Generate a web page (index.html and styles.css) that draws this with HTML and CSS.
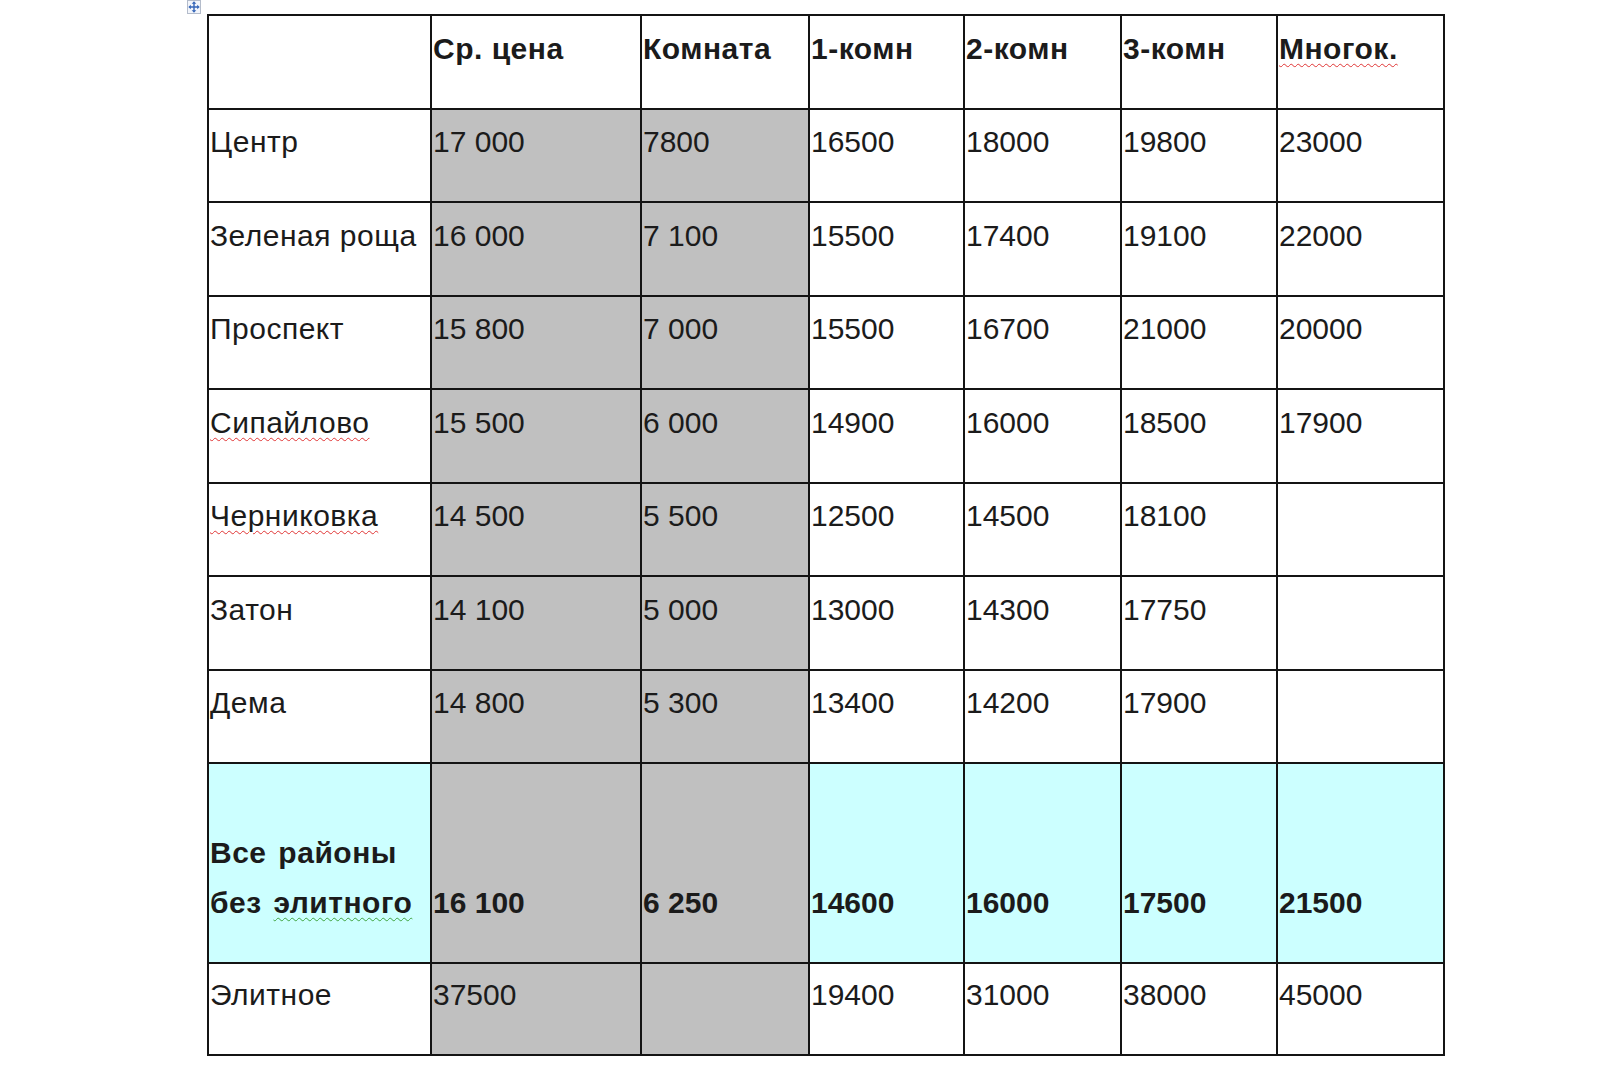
FILE: index.html
```html
<!DOCTYPE html>
<html lang="ru">
<head>
<meta charset="utf-8">
<title>Цены</title>
<link rel="stylesheet" href="styles.css">
</head>
<body>
<div class="sheet">
  <span class="move-handle">
    <svg width="12" height="12" viewBox="0 0 12 12">
      <path d="M6 2 V10 M2 6 H10" stroke="#3565b8" stroke-width="1.4" fill="none"/>
      <path d="M6 0.3 L8.3 2.8 H3.7 Z M6 11.7 L8.3 9.2 H3.7 Z M0.3 6 L2.8 3.7 V8.3 Z M11.7 6 L9.2 3.7 V8.3 Z" fill="#3565b8"/>
    </svg>
  </span>
  <table class="prices">
    <colgroup>
      <col class="c-name"><col class="c-avg"><col class="c-room"><col class="c-k1"><col class="c-k2"><col class="c-k3"><col class="c-many">
    </colgroup>
    <tr class="row head">
      <td></td><td>Ср. цена</td><td>Комната</td><td>1-комн</td><td>2-комн</td><td>3-комн</td><td><span class="err">Многок.</span></td>
    </tr>
    <tr class="row">
      <td>Центр</td><td class="gray">17 000</td><td class="gray">7800</td><td>16500</td><td>18000</td><td>19800</td><td>23000</td>
    </tr>
    <tr class="row">
      <td>Зеленая роща</td><td class="gray">16 000</td><td class="gray">7 100</td><td>15500</td><td>17400</td><td>19100</td><td>22000</td>
    </tr>
    <tr class="row">
      <td>Проспект</td><td class="gray">15 800</td><td class="gray">7 000</td><td>15500</td><td>16700</td><td>21000</td><td>20000</td>
    </tr>
    <tr class="row">
      <td><span class="err">Сипайлово</span></td><td class="gray">15 500</td><td class="gray">6 000</td><td>14900</td><td>16000</td><td>18500</td><td>17900</td>
    </tr>
    <tr class="row">
      <td><span class="err">Черниковка</span></td><td class="gray">14 500</td><td class="gray">5 500</td><td>12500</td><td>14500</td><td>18100</td><td></td>
    </tr>
    <tr class="row">
      <td>Затон</td><td class="gray">14 100</td><td class="gray">5 000</td><td>13000</td><td>14300</td><td>17750</td><td></td>
    </tr>
    <tr class="row">
      <td>Дема</td><td class="gray">14 800</td><td class="gray">5 300</td><td>13400</td><td>14200</td><td>17900</td><td></td>
    </tr>
    <tr class="row total">
      <td class="cyan">Все районы<br>без <span class="gram">элитного</span></td><td class="gray">16 100</td><td class="gray">6 250</td><td class="cyan">14600</td><td class="cyan">16000</td><td class="cyan">17500</td><td class="cyan">21500</td>
    </tr>
    <tr class="row last">
      <td>Элитное</td><td class="gray">37500</td><td class="gray"></td><td>19400</td><td>31000</td><td>38000</td><td>45000</td>
    </tr>
  </table>
  <span class="resize-handle"></span>
</div>
</body>
</html>
```
FILE: styles.css
```css
html, body {
  margin: 0;
  padding: 0;
  background: #ffffff;
}

.sheet {
  position: relative;
  width: 1238px;
  margin: 14px 0 0 207px;
}

.move-handle {
  position: absolute;
  left: -20px;
  top: -14px;
  width: 14px;
  height: 14px;
  box-sizing: border-box;
  border: 1px solid #b4bccb;
  background: #f2f5fb;
  display: flex;
  align-items: center;
  justify-content: center;
}

.move-handle svg {
  display: block;
  width: 12px;
  height: 12px;
}

.resize-handle {
  position: absolute;
  right: -3px;
  bottom: -11px;
  width: 4px;
  height: 5px;
  border: 1px solid #9a9a9a;
  border-bottom: none;
  background: #ffffff;
}

.prices {
  border-collapse: collapse;
  table-layout: fixed;
  width: 1238px;
  font-family: "Liberation Sans", Arial, sans-serif;
  font-size: 30px;
  color: #1b1b1b;
}

.c-name { width: 223px; }
.c-avg { width: 210px; }
.c-room { width: 168px; }
.c-k1 { width: 155px; }
.c-k2 { width: 157px; }
.c-k3 { width: 156px; }
.c-many { width: 167px; }

.prices td {
  border: 2px solid #141414;
  padding: 0 0 34px 1px;
  vertical-align: bottom;
  line-height: 50px;
  white-space: nowrap;
  overflow: hidden;
}

.prices td:first-child,
.head td {
  letter-spacing: 0.5px;
}

.total td:first-child {
  word-spacing: 3px;
}

.row { height: 93.5px; }
.row.total { height: 200px; }
.row.last { height: 92px; }

.head td { font-weight: bold; }
.total td { font-weight: bold; }

.gray { background: #c0c0c0; }
.cyan { background: #ccffff; }

.err {
  text-decoration: underline wavy #e03535;
  text-decoration-thickness: 1px;
  text-underline-offset: 4px;
}

.gram {
  text-decoration: underline wavy #3fa33f;
  text-decoration-thickness: 1px;
  text-underline-offset: 4px;
}
```
